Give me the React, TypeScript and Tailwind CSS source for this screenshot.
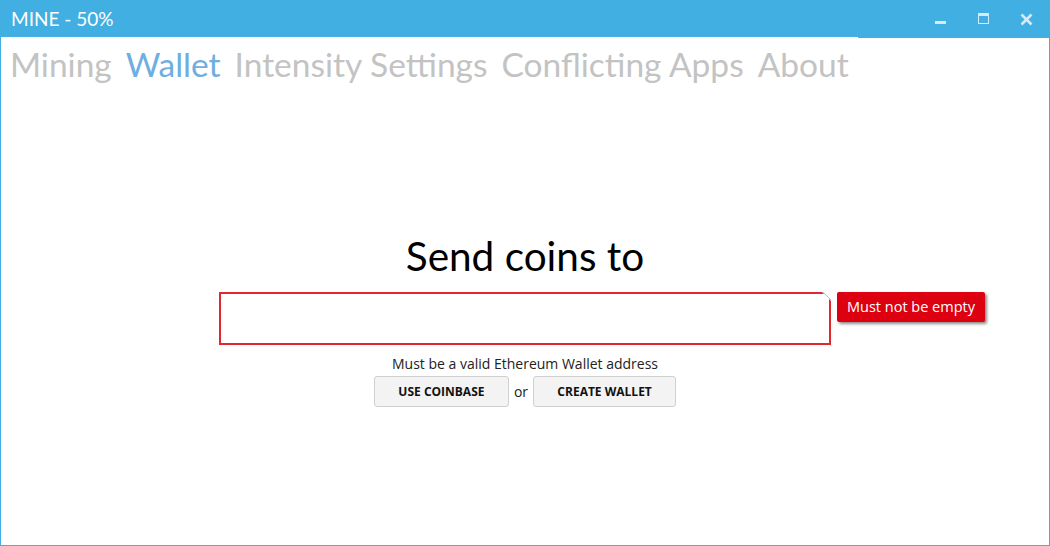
import { useState } from "react";

const tabs = ["Mining", "Wallet", "Intensity Settings", "Conflicting Apps", "About"];

function WindowControls() {
  return (
    <div className="flex items-center h-full">
      <button className="w-[43px] h-full flex items-center justify-center">
        <svg width="12" height="12" viewBox="0 0 12 12">
          <rect x="0" y="8" width="11" height="3" fill="#d4ecf9" />
        </svg>
      </button>
      <button className="w-[43px] h-full flex items-center justify-center">
        <svg width="12" height="12" viewBox="0 0 12 12">
          <rect x="0.5" y="0.5" width="10" height="10" fill="none" stroke="#d4ecf9" strokeWidth="1" />
          <rect x="0" y="0" width="11" height="3" fill="#d4ecf9" />
        </svg>
      </button>
      <button className="w-[43px] h-full flex items-center justify-center">
        <svg width="13" height="13" viewBox="0 0 13 13">
          <path d="M1.5 1.5 L11.5 11.5 M11.5 1.5 L1.5 11.5" stroke="#d4ecf9" strokeWidth="2.6" />
        </svg>
      </button>
    </div>
  );
}

export default function App() {
  const [active] = useState("Wallet");

  return (
    <div
      className="w-[1050px] h-[546px] bg-[#41afe1] flex flex-col overflow-hidden"
      style={{ fontFamily: '"Open Sans", "Noto Sans", sans-serif' }}
    >
      <div className="h-[38px] flex items-center justify-between pl-[11px] pr-[2px]">
        <span className="text-white text-[19px] font-['Lato',sans-serif]">MINE - 50%</span>
        <WindowControls />
      </div>

      <div className="flex-1 mx-[1px] mb-[1px] bg-white flex flex-col">
        <div className="w-[857px] h-[1px] -mt-[1px] bg-white" />
        <nav className="flex gap-[14px] pl-[9px] pt-[4px] h-[52px] font-['Lato',sans-serif]">
          {tabs.map((tab) => (
            <span
              key={tab}
              className={`text-[33.5px] leading-[44px] ${
                tab === active ? "text-[#6eaee0]" : "text-[#c3c3c3]"
              }`}
            >
              {tab}
            </span>
          ))}
        </nav>

        <div className="flex flex-col items-center pt-[142px]">
          <h1 className="text-[40.5px] leading-[48px] text-black font-['Lato',sans-serif]">Send coins to</h1>

          <div className="relative mt-[12px]">
            <input
              className="w-[612px] h-[53px] border-2 border-[#e3262f] outline-none px-2 text-[16px]"
              aria-label="Wallet address"
            />
            <svg className="absolute right-0 top-0" width="9" height="9" viewBox="0 0 9 9">
              <polygon points="0,0 9,0 9,9" fill="#ffffff" />
              <line x1="1" y1="0" x2="9" y2="8" stroke="#bdbdbd" strokeWidth="1" />
            </svg>
            <div className="absolute left-[618px] top-0 h-[30px] px-[10px] flex items-center whitespace-nowrap rounded-[2px] bg-[#dd0011] text-white text-[14.5px] shadow-[2px_2px_3px_rgba(0,0,0,0.45)]">
              Must not be empty
            </div>
          </div>

          <p className="mt-[10px] text-[14px] leading-[18px] text-[#222]">
            Must be a valid Ethereum Wallet address
          </p>

          <div className="mt-[3px] flex items-center gap-[4px]">
            <button className="w-[135px] h-[31px] rounded-[3px] border border-[#d0d0d0] bg-[#f3f3f3] text-[12px] font-bold text-[#111]">
              USE COINBASE
            </button>
            <span className="text-[14px] text-[#222] px-[1px]">or</span>
            <button className="w-[143px] h-[31px] rounded-[3px] border border-[#d0d0d0] bg-[#f3f3f3] text-[12px] font-bold text-[#111]">
              CREATE WALLET
            </button>
          </div>
        </div>
      </div>
    </div>
  );
}
